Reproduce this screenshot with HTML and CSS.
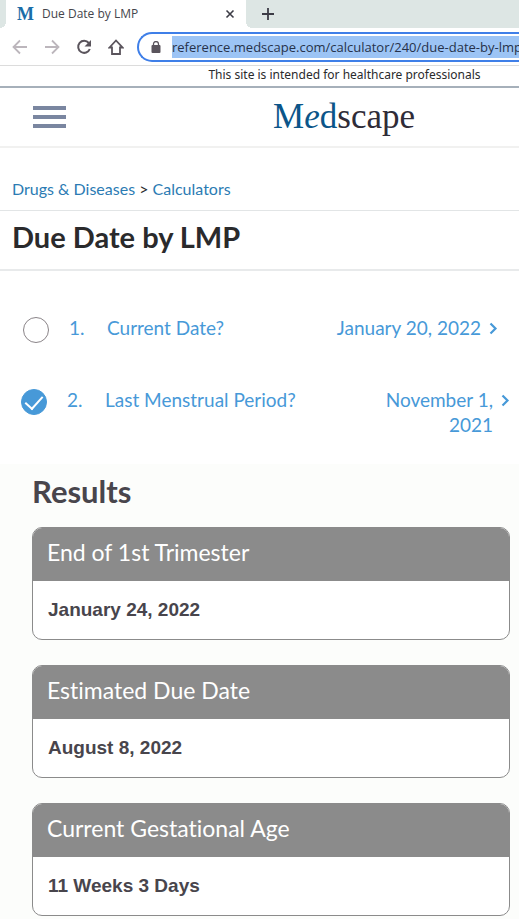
FILE: index.html
```html
<!DOCTYPE html>
<html lang="en">
<head>
  <meta charset="UTF-8">
  <meta name="viewport" content="width=device-width, initial-scale=1.0">
  <title>Due Date by LMP</title>
  <link rel="stylesheet" href="styles.css">
</head>
<body>
  <!-- Browser bar -->
  <div class="tab-strip">
    <div class="tab">
      <span class="favicon">M</span>
      <span class="tab-title">Due Date by LMP</span>
      <button class="tab-close" aria-label="Close tab">
        <svg width="10" height="10" viewBox="0 0 10 10"><path d="M1.5 1.5l7 7M8.5 1.5l-7 7" stroke="#3c3c46" stroke-width="1.6"/></svg>
      </button>
    </div>
    <button class="new-tab" aria-label="New tab">
      <svg width="12" height="12" viewBox="0 0 12 12"><path d="M6 0v12M0 6h12" stroke="#3c3c46" stroke-width="1.8"/></svg>
    </button>
  </div>

  <div class="toolbar">
    <button aria-label="Back">
      <svg width="16" height="16" viewBox="0 0 16 16" fill="none" stroke="#bcb6bc" stroke-width="1.8"><path d="M15 8H2M8 1.5L1.5 8 8 14.5"/></svg>
    </button>
    <button aria-label="Forward">
      <svg width="16" height="16" viewBox="0 0 16 16" fill="none" stroke="#bcb6bc" stroke-width="1.8"><path d="M1 8h13M8 1.5L14.5 8 8 14.5"/></svg>
    </button>
    <button aria-label="Reload">
      <svg width="16" height="16" viewBox="0 0 16 16"><path d="M12.8 4A6 6 0 1 0 13.8 10" fill="none" stroke="#5a545c" stroke-width="2"/><path d="M15 1v6.500H8.500z" fill="#5a545c"/></svg>
    </button>
    <button aria-label="Home">
      <svg width="16" height="16" viewBox="0 0 16 16"><path d="M1.5 8.5L8 1.500l6.500 7H12V15H4V8.500z" fill="none" stroke="#5a545c" stroke-width="1.8"/></svg>
    </button>
    <div class="address">
      <svg width="10" height="12" viewBox="0 0 10 12"><rect x="0.5" y="4" width="9" height="8" rx="1" fill="#5a545c"/><path d="M2.500 5V3a2.500 2.500 0 0 1 5 0v2" fill="none" stroke="#5a545c" stroke-width="1.3"/></svg>
      <input type="text" aria-label="Address" value="reference.medscape.com/calculator/240/due-date-by-lmp">
    </div>
  </div>

  <p class="notice">This site is intended for healthcare professionals</p>

  <header class="site-header">
    <button class="menu" aria-label="Menu">
      <span></span>
      <span></span>
      <span></span>
    </button>
    <a class="logo" href="#"><span>M<i>e</i>d</span>scape</a>
  </header>

  <main>
    <nav class="breadcrumb">
      <a href="#">Drugs &amp; Diseases</a> &gt; <a href="#">Calculators</a>
    </nav>
    <h1>Due Date by LMP</h1>

    <ol class="questions">
      <li class="question">
        <input type="checkbox" id="q1">
        <span class="number">1.</span>
        <label for="q1">Current Date?</label>
        <a href="#">January 20, 2022</a>
        <svg width="9" height="13" viewBox="0 0 9 13"><path d="M1.5 1.5l5 5-5 5" fill="none" stroke="#4799d8" stroke-width="2.2"/></svg>
      </li>
      <li class="question answered">
        <input type="checkbox" id="q2" checked>
        <span class="number">2.</span>
        <label for="q2">Last Menstrual Period?</label>
        <a href="#">November 1, 2021</a>
        <svg width="9" height="13" viewBox="0 0 9 13"><path d="M1.5 1.5l5 5-5 5" fill="none" stroke="#4799d8" stroke-width="2.2"/></svg>
      </li>
    </ol>

    <section class="results">
      <h2>Results</h2>
      <article class="card">
        <h3>End of 1st Trimester</h3>
        <p>January 24, 2022</p>
      </article>
      <article class="card">
        <h3>Estimated Due Date</h3>
        <p>August 8, 2022</p>
      </article>
      <article class="card">
        <h3>Current Gestational Age</h3>
        <p>11 Weeks 3 Days</p>
      </article>
    </section>
  </main>
</body>
</html>
```
FILE: styles.css
```css
* {
  margin: 0;
  padding: 0;
  box-sizing: border-box;
}

body {
  font-family: Lato, sans-serif;
  font-variant-ligatures: none;
  background-color: #fff;
  color: #2a2a2c;
  overflow-x: hidden;
}

a {
  color: #2b7bb3;
  text-decoration: none;
}

button {
  display: flex;
  border: none;
  background: none;
  cursor: pointer;
}

svg {
  display: block;
  flex: none;
}

/* Browser bar */
.tab-strip {
  display: flex;
  align-items: center;
  height: 28px;
  padding-left: 6px;
  background-color: #dde6e4;
}

.tab {
  display: flex;
  align-items: center;
  width: 240px;
  height: 28px;
  padding: 0 11px;
  background-color: #fff;
  position: relative;
}

/* curved feet of the active tab */
.tab::before,
.tab::after {
  content: "";
  position: absolute;
  bottom: 0;
  width: 6px;
  height: 6px;
}

.tab::before {
  right: 100%;
  background: radial-gradient(circle at 0 0, #dde6e4 6px, #fff 6px);
}

.tab::after {
  left: 100%;
  background: radial-gradient(circle at 100% 0, #dde6e4 6px, #fff 6px);
}

.favicon {
  width: 25px;
  font: bold 18px/24px "Liberation Serif", serif;
  color: #1a6ea8;
}

.tab-title {
  flex: 1;
  font: 12px/24px "Open Sans", sans-serif;
  color: #45454c;
}

.new-tab {
  margin-left: 16px;
}

.toolbar {
  display: flex;
  align-items: center;
  gap: 16px;
  height: 38px;
  padding-left: 12px;
  border-bottom: 1px solid #dcdcdc;
}

.address {
  flex: 1;
  display: flex;
  align-items: center;
  gap: 11px;
  min-width: 0;
  height: 30px;
  margin-left: -3px;
  padding-left: 12px;
  border: 2px solid #3f7fe8;
  border-right: none;
  border-radius: 15px 0 0 15px;
}

.address input {
  flex: 1;
  min-width: 0;
  height: 22px;
  border: none;
  background-color: #9cc4f5;
  font: 13px "Open Sans", sans-serif;
  color: #26324a;
}

.notice {
  padding-left: 170px;
  border-bottom: 2px solid #a6b0ba;
  font: 12px/18px "Noto Sans", sans-serif;
  padding-bottom: 2px;
  text-align: center;
  white-space: nowrap;
}

/* Site header */
.site-header {
  display: flex;
  align-items: center;
  justify-content: space-between;
  height: 60px;
  padding: 0 104px 0 33px;
  border-bottom: 2px solid #f1f1f0;
}

.menu {
  flex-direction: column;
  gap: 5px;
}

.menu span {
  width: 33px;
  height: 4px;
  background-color: #7a86a0;
}

.logo {
  font: 35px/40px "Liberation Serif", serif;
  color: #2f2c38;
}

.logo span {
  color: #0b5589;
}

/* Calculator */
.breadcrumb {
  padding: 30px 12px 11px;
  border-bottom: 1px solid #e2e5e6;
  font-size: 16px;
  line-height: 21px;
}

h1 {
  padding: 8px 12px 14px;
  border-bottom: 2px solid #e8eaeb;
  font-size: 29px;
  line-height: 36px;
}

.questions {
  padding: 44px 0 27px;
  list-style: none;
}

.question {
  display: flex;
  align-items: flex-start;
  padding: 0 21px 0 23px;
  font-size: 19px;
  line-height: 25px;
  color: #4799d8;
}

.question.answered {
  padding: 0 9px 0 21px;
  margin-top: 44px;
}

.question input {
  flex: none;
  display: grid;
  place-items: center;
  appearance: none;
  width: 26px;
  height: 26px;
  margin-top: 2px;
  border: 1px solid #8a8488;
  border-radius: 50%;
}

.question input:checked {
  border-color: #4799d8;
  background-color: #4799d8;
}

.question input:checked::before {
  content: "";
  width: 8px;
  height: 15px;
  margin-bottom: 4px;
  border: solid #fff;
  border-width: 0 2px 2px 0;
  transform: rotate(42deg);
}

.number {
  width: 38px;
  margin-left: 20px;
}

.question label {
  flex: 1;
}

.question a {
  max-width: 150px;
  color: inherit;
  text-align: right;
}

.question.answered a {
  max-width: 110px;
}

.question svg {
  margin: 7px 0 0 8px;
}

/* Results */
.results {
  padding: 7px 9px 4px 32px;
  background-color: #fcfdfb;
}

h2 {
  margin-bottom: 16px;
  font-size: 31px;
  line-height: 40px;
  color: #48454c;
}

.card {
  border: 1px solid #8b8b8b;
  border-radius: 10px;
  background-color: #fff;
  overflow: hidden;
}

.card + .card {
  margin-top: 25px;
}

.card h3 {
  padding: 9px 14px 14px;
  background-color: #8b8b8b;
  font-size: 23px;
  font-weight: normal;
  line-height: 30px;
  color: #fff;
}

.card p {
  padding: 16px 15px;
  font: bold 19px/26px "Liberation Sans", sans-serif;
  color: #48454c;
}
```
